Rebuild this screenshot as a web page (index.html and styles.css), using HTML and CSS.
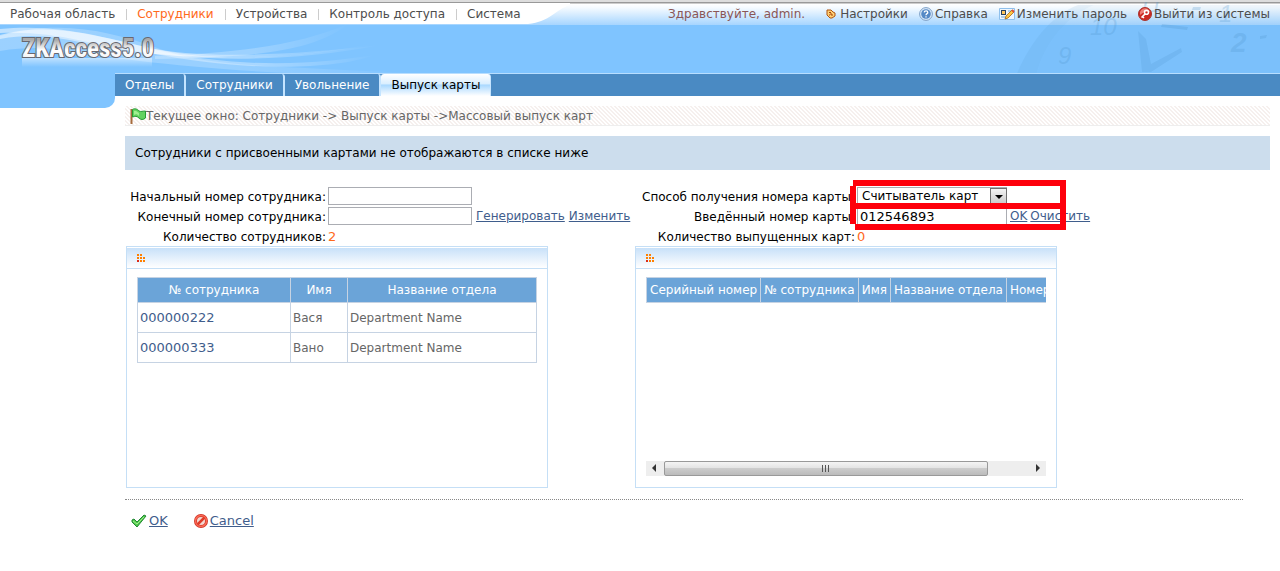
FILE: index.html
```html
<!DOCTYPE html>
<html lang="ru">

<head>
    <meta charset="UTF-8">
    <meta name="viewport" content="width=device-width, initial-scale=1.0">
    <title>ZKAccess5.0</title>
    <link rel="stylesheet" href="styles.css">
</head>

<body>
    <header class="header">
        <!-- waves, white menu shape and clock behind the header -->
        <svg class="waves" width="570" height="74" viewBox="0 0 570 74" aria-hidden="true">
            <defs>
                <linearGradient id="wave" x1="0" x2="1" y1="0" y2="0">
                    <stop offset="0" stop-color="#fff" stop-opacity=".5" />
                    <stop offset=".5" stop-color="#fff" stop-opacity=".45" />
                    <stop offset="1" stop-color="#fff" stop-opacity="0" />
                </linearGradient>
            </defs>
            <path d="M0 35C60 18 110 30 160 48S260 64 430 73C300 76 210 68 140 60S50 42 0 50Z" fill="url(#wave)" opacity=".45" />
            <path d="M0 34C50 20 100 36 155 48S280 60 380 42C290 60 210 58 145 52S55 28 0 38Z" fill="url(#wave)" />
            <path d="M0 28C60 22 110 38 150 47S270 57 380 44C280 64 190 58 140 51S60 30 0 32Z" fill="url(#wave)" />
            <path d="M155 55C240 52 300 44 350 22C310 54 240 56 155 58Z" fill="url(#wave)" opacity=".5" />
            <path d="M150 48C250 70 320 62 375 54C330 70 240 70 150 52Z" fill="url(#wave)" opacity=".7" />
            <path d="M0 0H570V4C556 8 550 21 528 23H0Z" fill="#fff" />
        </svg>
        <svg class="clock" width="280" height="74" viewBox="0 0 280 74" aria-hidden="true">
            <g fill="#4a90c8" opacity=".28">
                <path d="M16 74C28 45 48 15 78 3H94C60 18 42 48 36 74Z" opacity=".4" />
                <path d="M36 74C42 48 60 18 94 3H280V74Z" opacity=".2" />
                <path d="M138 29L146 37L151 62L181 46L182 50L151 70L142 70Z" opacity=".8" />
                <g class="clock-num">
                    <text x="58" y="62">9</text>
                    <text x="90" y="33">10</text>
                    <text x="138" y="10">11</text>
                    <text x="219" y="20">1</text>
                    <text x="231" y="50" class="clock-two">2</text>
                </g>
                <path d="M162 22L188 25L187 28L161 25ZM193 5L201 5L200 8L192 8ZM260 34L267 33L266 36L260 37ZM240 72L250 72L250 74H240Z" />
            </g>
        </svg>

        <div class="top">
            <nav class="menu">
                <a href="#">Рабочая область</a>
                <a href="#" class="menu-now">Сотрудники</a>
                <a href="#">Устройства</a>
                <a href="#">Контроль доступа</a>
                <a href="#">Система</a>
            </nav>
            <div class="user">
                <span class="hello">Здравствуйте, admin.</span>
                <a href="#" class="settings">
                    <svg width="10" height="10" viewBox="0 0 10 10">
                        <path d="M1 1H5L7 3L9 4V7L6 9H4L1 6Z" fill="#ffd276" stroke="#b0520e" />
                        <path d="M3 3.5h2M5 4v2h2M3 6h1" fill="none" stroke="#a8420a" />
                    </svg>Настройки</a>
                <a href="#">
                    <svg width="14" height="14" viewBox="0 0 14 14">
                        <circle cx="7" cy="7" r="6.4" fill="#dcebfa" stroke="#7d9fc6" />
                        <circle cx="7" cy="7" r="4.8" fill="#5589c5" />
                        <path d="M5.2 5.4C5.3 3.4 8.8 3.4 8.8 5.4C8.8 6.7 7 6.6 7 8.2M7 9.3V10.5" fill="none" stroke="#fff" stroke-width="1.3" />
                    </svg>Справка</a>
                <a href="#">
                    <svg width="16" height="14" viewBox="0 0 16 14">
                        <path d="M.5 1.5H15.5V12.5H.5Z" fill="#eef7ff" stroke="#8fc0ec" />
                        <path d="M2 3H7V8H2Z" fill="#27405e" />
                        <path d="M3 4H6V7H3Z" fill="#ffc75e" />
                        <path d="M2 10H7M9 4H13" stroke="#75a7d4" />
                        <path d="M6 12L7 9L13 3L15 5L9 11Z" fill="#ffc844" stroke="#a66716" stroke-width=".8" />
                        <path d="M13 3L15 5" stroke="#db4f38" stroke-width="2" />
                    </svg>Изменить пароль</a>
                <a href="#">
                    <svg width="14" height="14" viewBox="0 0 14 14">
                        <circle cx="7" cy="7" r="6.5" fill="#cc2922" stroke="#a9342e" />
                        <path d="M2 5C4 0 10 0 12 5C8 4 5 5 2 8Z" fill="#ee8078" />
                        <circle cx="8.5" cy="5.3" r="2" fill="none" stroke="#fff" stroke-width="1.6" />
                        <path d="M7 7L3.5 10.5M4.3 9.5L6 11" stroke="#fff" stroke-width="1.6" />
                    </svg>Выйти из системы</a>
            </div>
        </div>

        <svg class="logo" width="160" height="42" viewBox="0 0 160 42" role="img" aria-label="ZKAccess5.0">
            <defs>
                <linearGradient id="silver" x1="0" x2="0" y1="0" y2="1">
                    <stop offset=".2" stop-color="#aaa" />
                    <stop offset=".55" stop-color="#fff" />
                    <stop offset="1" stop-color="#eee" />
                </linearGradient>
                <linearGradient id="fade" x1="0" x2="0" y1="0" y2="1">
                    <stop offset="0" stop-color="#fff" stop-opacity=".5" />
                    <stop offset="1" stop-color="#fff" stop-opacity="0" />
                </linearGradient>
            </defs>
            <path d="M2 26H132V35H2Z" fill="url(#fade)" />
            <text class="logo-text" x="2" y="25" fill="url(#silver)" stroke="#686870">ZKAccess5.0</text>
        </svg>
    </header>

    <div class="tabbar">
        <div class="corner"></div>
        <nav class="tabs">
            <a href="#">Отделы</a>
            <a href="#">Сотрудники</a>
            <a href="#">Увольнение</a>
            <a href="#" class="tab-now">Выпуск карты</a>
        </nav>
    </div>

    <main class="main">
        <div class="path">
            <svg width="16" height="16" viewBox="0 0 16 16">
                <path d="M1.5 1V16" stroke="#a66b3c" stroke-width="2" />
                <path d="M2.5 1.5C5 0 7 1 9 3C11 4 13 3 15.5 3V10C13 12 11 12 9 10C7 8 5 8 2.5 9Z" fill="#62d260" stroke="#269a34" />
                <path d="M4 3C6 2 7 4 9 5V8C7 6 6 6 4 7Z" fill="#a0f090" />
            </svg>Текущее окно: Сотрудники -&gt; Выпуск карты -&gt;Массовый выпуск карт</div>
        <div class="note">Сотрудники с присвоенными картами не отображаются в списке ниже</div>

        <form class="columns">
            <section class="column">
                <div class="fields">
                    <label for="start">Начальный номер сотрудника:</label>
                    <div class="field"><input type="text" id="start"></div>
                    <label for="end">Конечный номер сотрудника:</label>
                    <div class="field"><input type="text" id="end"><a href="#">Генерировать</a><a href="#">Изменить</a></div>
                    <span class="label">Количество сотрудников:</span>
                    <span class="count">2</span>
                </div>
                <div class="panel">
                    <div class="panel-head">
                        <svg width="9" height="8" viewBox="0 0 9 8">
                            <path d="M0 0h2v2H0zM3 0h2v2H3zM0 3h2v2H0zM3 3h2v2H3zM6 3h2v2H6zM3 6h2v2H3zM6 6h2v2H6z" fill="#ff8000" />
                            <path d="M0 6h2v2H0z" fill="#dc2c18" />
                        </svg>
                    </div>
                    <div class="panel-body">
                        <table class="staff">
                            <thead>
                                <tr><th class="col-id">№ сотрудника</th><th class="col-name">Имя</th><th>Название отдела</th></tr>
                            </thead>
                            <tbody>
                                <tr><td class="id">000000222</td><td>Вася</td><td>Department Name</td></tr>
                                <tr><td class="id">000000333</td><td>Вано</td><td>Department Name</td></tr>
                            </tbody>
                        </table>
                    </div>
                </div>
            </section>

            <section class="column">
                <div class="fields fields-card">
                    <label for="method">Способ получения номера карты:</label>
                    <div class="select">
                        <select id="method"><option>Считыватель карт</option></select>
                        <span class="arrow"></span>
                    </div>
                    <label for="card">Введённый номер карты:</label>
                    <div class="field"><input type="text" id="card" value="012546893"><a href="#">OK</a><a href="#">Очистить</a></div>
                    <span class="label">Количество выпущенных карт:</span>
                    <span class="count">0</span>
                    <!-- red marker around the two fields -->
                    <svg class="marker" width="216" height="50" viewBox="0 0 216 50" aria-hidden="true">
                        <path d="M3 3H213V47M3 6V44M5 26H213M5 47H216" fill="none" stroke="#fe000c" stroke-width="6" />
                    </svg>
                </div>
                <div class="panel">
                    <div class="panel-head">
                        <svg width="9" height="8" viewBox="0 0 9 8">
                            <path d="M0 0h2v2H0zM3 0h2v2H3zM0 3h2v2H0zM3 3h2v2H3zM6 3h2v2H6zM3 6h2v2H3zM6 6h2v2H6z" fill="#ff8000" />
                            <path d="M0 6h2v2H0z" fill="#dc2c18" />
                        </svg>
                    </div>
                    <div class="panel-body">
                        <div class="scroll">
                            <table class="cards">
                                <thead>
                                    <tr><th>Серийный номер</th><th>№ сотрудника</th><th>Имя</th><th>Название отдела</th><th>Номер</th></tr>
                                </thead>
                            </table>
                        </div>
                        <div class="scrollbar">
                            <svg width="16" height="15" viewBox="0 0 16 15"><path d="M10 3V11L6 7Z" fill="#333" /></svg>
                            <div class="track"><div class="thumb"><i></i><i></i><i></i></div></div>
                            <svg width="16" height="15" viewBox="0 0 16 15"><path d="M6 3V11L10 7Z" fill="#333" /></svg>
                        </div>
                    </div>
                </div>
            </section>
        </form>

        <footer class="actions">
            <a href="#">
                <svg width="16" height="14" viewBox="0 0 16 14">
                    <path d="M1 6L3 5L6 8L13 1L15 2L6 13L1 8Z" fill="#4dc84a" stroke="#248735" />
                    <path d="M2 7L6 10L13 3" fill="none" stroke="#a0ec8b" />
                </svg><span>OK</span></a>
            <a href="#">
                <svg width="14" height="14" viewBox="0 0 14 14">
                    <circle cx="7" cy="7" r="5.5" fill="#f4d8d1" stroke="#cf3528" stroke-width="3" />
                    <circle cx="7" cy="7" r="5.5" fill="none" stroke="#fa6954" stroke-width="1.5" />
                    <path d="M3.5 10.5L10.5 3.5" stroke="#df3c29" stroke-width="2.5" />
                </svg><span>Cancel</span></a>
        </footer>
    </main>
</body>

</html>
```
FILE: styles.css
```css
* {
    box-sizing: border-box;
}

body {
    margin: 0;
    background-color: #fff;
    color: #000;
    font: 12px/16px Verdana, "DejaVu Sans", sans-serif;
}

a {
    color: #3f5d8c;
}

svg {
    flex: none;
}

.header {
    position: relative;
    height: 73px;
    border-top: 2px solid #ddd;
    background: linear-gradient(#999 1px, #fff 2px, #f4faff 6px, #a6d5ff 23px, #7fc4ff 23px);
    overflow: hidden;
}

.waves,
.clock {
    position: absolute;
    top: 0;
}

.waves {
    left: 0;
    top: -1px;
    clip-path: inset(2px 0 0);
}

.clock {
    right: 0;
}

.clock-num {
    font: italic 24px "Liberation Sans", sans-serif;
}

.clock-two {
    font-size: 28px;
    font-weight: bold;
}

.top {
    position: relative;
    display: flex;
    justify-content: space-between;
    padding: 4px 10px 0;
    white-space: nowrap;
}

.top a {
    color: #4d4d4d;
    text-decoration: none;
}

.menu,
.user,
.user a {
    display: flex;
    align-items: center;
}

.menu a + a {
    margin-left: 11px;
    padding-left: 11px;
    background: linear-gradient(#ccc, #ccc) 0 3px / 1px 11px no-repeat;
}

.menu .menu-now {
    color: #ff6a1c;
}

.user {
    gap: 11px;
}

.user a {
    gap: 2px;
}

.user .hello {
    margin-right: 10px;
    color: #8a5656;
}

.user .settings {
    gap: 4px;
}

.logo {
    position: relative;
    display: block;
    margin: 10px 0 0 20px;
}

.logo-text {
    font: bold 25px "Roboto Condensed", "Open Sans Condensed", "Liberation Sans", sans-serif;
    stroke-width: 2px;
    paint-order: stroke;
}

.tabbar {
    display: flex;
    align-items: flex-start;
    height: 33px;
    background: #fff;
}

.corner {
    width: 115px;
    height: 35px;
    border-radius: 0 0 10px 0;
    background-color: #7fc4ff;
}

.tabs {
    flex: 1;
    display: flex;
    height: 23px;
    border-top: 1px solid #b8deff;
    background-color: #4a8ac3;
}

.tabs a {
    padding: 3px 10px;
    border-right: 2px solid #c4e4ff;
    border-radius: 3px 3px 0 0;
    color: #fff;
    text-decoration: none;
}

.tabs .tab-now {
    border-right-width: 1px;
    background: linear-gradient(#fff, #d9eeff 45%, #a9d8ff 50%, #fff);
    color: #000;
}

.main {
    padding: 0 10px 20px 125px;
}

.path {
    display: flex;
    align-items: center;
    height: 20px;
    padding-left: 5px;
    border-bottom: 1px solid #eee;
    background: linear-gradient(45deg, #f6f0ee 25%, #fff 25% 50%, #f6f0ee 50% 75%, #fff 75%) 0 0 / 4px 4px;
    color: #666;
}

.note {
    margin-top: 10px;
    padding: 9px 10px;
    background-color: #ccdded;
}

.columns {
    display: flex;
    gap: 87px;
    margin: 16px 0 11px;
}

.column {
    width: 422px;
    margin-left: 1px;
}

.column + .column {
    margin-left: 0;
}

.fields {
    position: relative;
    display: grid;
    grid-template-columns: 200px auto;
    grid-template-rows: 20px 20px 20px;
    align-items: center;
    column-gap: 2px;
    white-space: nowrap;
}

.fields-card {
    grid-template-columns: 220px auto;
}

.fields label,
.fields .label {
    justify-self: end;
    padding-top: 2px;
}

.field {
    display: flex;
    align-items: center;
    gap: 4px;
}

.fields-card .field {
    gap: 3px;
}

.fields input {
    width: 144px;
    height: 18px;
    padding: 0 2px;
    border: 1px solid #abadb3;
    background-color: #fff;
    color: #000;
    font: inherit;
    font-size: 13px;
}

.fields-card input {
    width: 150px;
}

.count {
    padding-top: 2px;
    color: #ff6a1c;
    font-size: 13px;
}

.select {
    position: relative;
    width: 150px;
    height: 18px;
}

.select select {
    width: 150px;
    height: 18px;
    padding: 0 4px;
    border: 1px solid #abadb3;
    background-color: #fff;
    color: #000;
    font: inherit;
    appearance: none;
}

.arrow {
    position: absolute;
    top: 1px;
    right: 0;
    width: 17px;
    height: 16px;
    border: 1px solid #707070;
    background: linear-gradient(#f4f4f4, #ccc);
    pointer-events: none;
}

.arrow::after {
    content: "";
    position: absolute;
    top: 6px;
    left: 4px;
    border: 4px solid transparent;
    border-top-color: #000;
    border-bottom: 0;
}

.marker {
    position: absolute;
    top: -6px;
    left: 215px;
    pointer-events: none;
}

.panel {
    height: 242px;
    border: 1px solid #c5dff6;
}

.panel-head {
    height: 22px;
    padding: 6px 10px;
    border-top: 1px solid #fff;
    border-bottom: 1px solid #c5dff6;
    background: linear-gradient(#c8e1f9, #fff);
    line-height: 0;
}

.panel-body {
    padding: 8px 10px 10px;
}

table {
    border-collapse: collapse;
    white-space: nowrap;
}

th,
td {
    padding: 0 2px;
    border: 1px solid #c6d3e3;
}

th {
    height: 25px;
    background-color: #6ba4d8;
    color: #fff;
    font-weight: normal;
}

td {
    height: 30px;
    color: #666;
}

.id {
    color: #3f5d8c;
    font-size: 13px;
}

.staff {
    width: 100%;
    table-layout: fixed;
}

.col-id {
    width: 153px;
}

.col-name {
    width: 57px;
}

.cards th {
    padding: 0 3px;
}

.scroll {
    height: 184px;
    overflow: hidden;
}

.scrollbar {
    display: flex;
    height: 15px;
    background-color: #eee;
}

.track {
    flex: 1;
    padding: 0 2px;
}

.thumb {
    display: flex;
    align-items: center;
    justify-content: center;
    gap: 2px;
    width: 89%;
    height: 15px;
    border: 1px solid #999;
    border-radius: 2px;
    background: linear-gradient(#f4f4f4, #e4e4e4 45%, #ccc 50%, #bbb);
}

.thumb i {
    width: 1px;
    height: 7px;
    background-color: #555;
}

.actions {
    display: flex;
    gap: 26px;
    margin-right: 27px;
    padding: 13px 6px;
    border-top: 1px dotted #888;
    font-size: 13px;
}

.actions a {
    display: flex;
    align-items: center;
    gap: 2px;
    text-decoration: none;
}

.actions span {
    text-decoration: underline;
}
```
